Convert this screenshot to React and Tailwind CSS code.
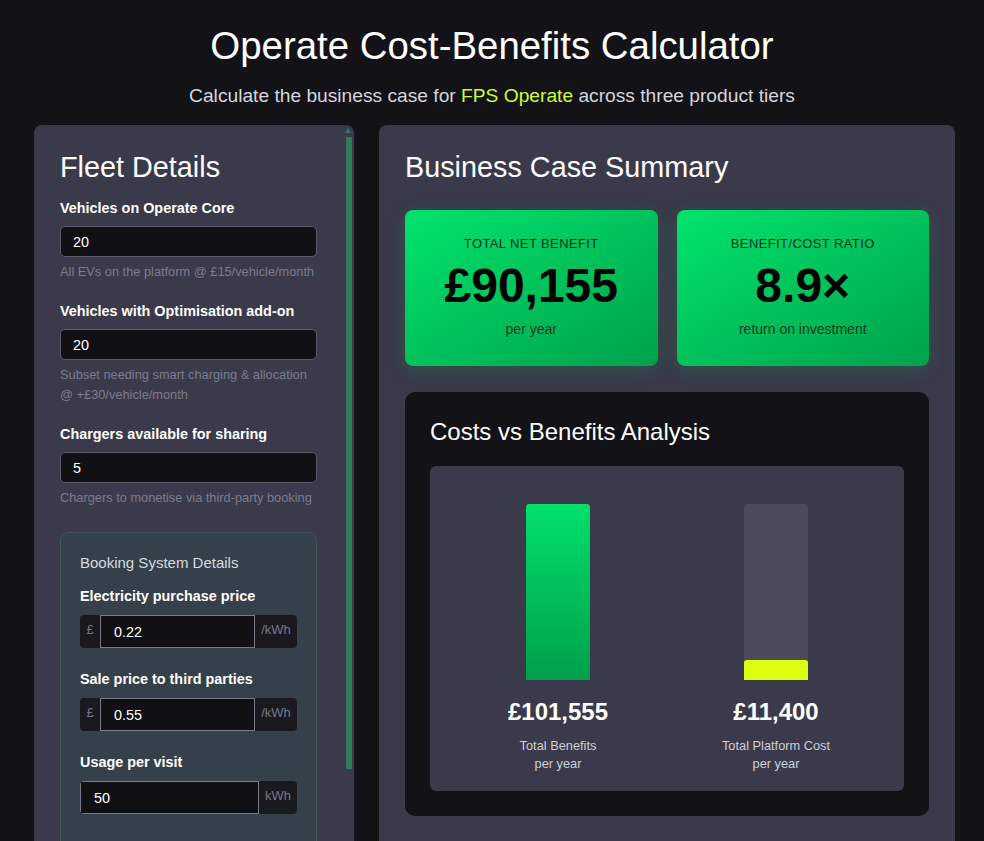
import { useState } from 'react';

const FONT = { fontFamily: '"Liberation Sans", Arial, sans-serif' };

function NumberField({ label, value, help }) {
  return (
    <div className="mb-[20px]">
      <label className="block text-[14.4px] font-bold text-white mb-[9px] leading-[18px]">{label}</label>
      <input
        type="text"
        defaultValue={value}
        className="w-full h-[31px] rounded-[5px] border border-[#5b5b6b] bg-[#111015] px-[12px] text-[14.4px] text-white outline-none"
      />
      <p className="mt-[5px] text-[12.8px] leading-[20px] text-[#7c7c8c]">{help}</p>
    </div>
  );
}

function UnitField({ label, value, prefix, suffix, last }) {
  return (
    <div className={last ? '' : 'mb-[22px]'}>
      <label className="block text-[14.4px] font-bold text-white mb-[10px] leading-[18px]">{label}</label>
      <div className="flex h-[33px] rounded-[4px] bg-[#1a1920] overflow-hidden">
        {prefix && (
          <span className="w-[20px] flex items-center justify-center text-[13px] text-[#77778a] pb-[3px]">
            {prefix}
          </span>
        )}
        <input
          type="text"
          defaultValue={value}
          className="flex-1 min-w-0 h-full border border-[#7a7a88] bg-[#111015] px-[13px] text-[14.4px] text-white outline-none"
        />
        <span
          className={
            suffix === 'kWh'
              ? 'w-[38px] flex items-center justify-center text-[13px] text-[#77778a] pb-[3px]'
              : 'w-[42px] flex items-center justify-center text-[13px] text-[#77778a] pb-[3px]'
          }
        >
          {suffix}
        </span>
      </div>
    </div>
  );
}

function SummaryCard({ title, value, sub }) {
  return (
    <div className="flex-1 h-[156px] rounded-[8px] bg-gradient-to-br from-[#00e46c] to-[#00a24c] shadow-[0_4px_18px_rgba(0,200,90,0.18)] flex flex-col items-center pt-[26px]">
      <p className="text-[13px] tracking-[0.4px] uppercase text-[#06301a] leading-[16px]">{title}</p>
      <p className="mt-[7px] text-[48px] font-bold text-black leading-[54px]">{value}</p>
      <p className="mt-[7px] text-[14px] text-[#0b3a20] leading-[18px]">{sub}</p>
    </div>
  );
}

function Bar({ fillPct, fillClass, value, label }) {
  return (
    <div className="w-[180px] flex flex-col items-center">
      <div className="w-[64px] h-[176px] rounded-t-[3px] bg-[#4a4a5a] flex flex-col justify-end overflow-hidden">
        <div className={fillClass} style={{ height: `${fillPct}%` }} />
      </div>
      <p className="mt-[18px] text-[24px] font-bold text-white leading-[28px]">{value}</p>
      <p className="mt-[11px] text-[12.8px] text-[#cfcfd8] leading-[18px] text-center">
        {label}
        <br />
        per year
      </p>
    </div>
  );
}

export default function App() {
  const [benefits] = useState(101555);
  const [cost] = useState(11400);
  const costPct = (cost / benefits) * 100;

  return (
    <div className="min-h-screen bg-[#131217] text-white overflow-hidden" style={FONT}>
      <header className="pt-[24px] text-center">
        <h1 className="text-[38.4px] leading-[44px] text-white">Operate Cost-Benefits Calculator</h1>
        <p className="mt-[16px] text-[19.2px] leading-[24px] text-[#d6d6de]">
          Calculate the business case for <span className="text-[#ccff33]">FPS Operate</span> across three product
          tiers
        </p>
      </header>

      <main className="mt-[17px] pl-[34px] pr-[29px] flex gap-[25px] items-start">
        {/* Inputs */}
        <section className="relative w-[320px] h-[760px] rounded-[8px] bg-[#3a3a4a] overflow-hidden shrink-0">
          <div className="pl-[26px] pr-[37px] pt-[26px]">
            <h2 className="text-[28.8px] leading-[32px] text-white mb-[16px]">Fleet Details</h2>
            <NumberField label="Vehicles on Operate Core" value="20" help="All EVs on the platform @ £15/vehicle/month" />
            <NumberField
              label="Vehicles with Optimisation add-on"
              value="20"
              help="Subset needing smart charging & allocation @ +£30/vehicle/month"
            />
            <NumberField
              label="Chargers available for sharing"
              value="5"
              help="Chargers to monetise via third-party booking"
            />

            <div className="mt-[24px] rounded-[8px] border border-[#3f5655] bg-[#36404a] px-[19px] pt-[21px] pb-[40px]">
              <h3 className="text-[15px] leading-[18px] text-[#d4dae0] mb-[15px]">Booking System Details</h3>
              <UnitField label="Electricity purchase price" value="0.22" prefix="£" suffix="/kWh" />
              <UnitField label="Sale price to third parties" value="0.55" prefix="£" suffix="/kWh" />
              <UnitField label="Usage per visit" value="50" suffix="kWh" last />
            </div>
          </div>

          {/* scrollbar */}
          <div className="absolute right-[3px] top-[3px] w-0 h-0 border-l-[3px] border-r-[3px] border-b-[5px] border-l-transparent border-r-transparent border-b-[#2e7a5c]" />
          <div className="absolute right-[2px] top-[12px] w-[6px] h-[632px] bg-[#2e7a5c]" />
        </section>

        {/* Summary */}
        <section className="flex-1 h-[760px] rounded-[8px] bg-[#3a3a4a] px-[26px] pt-[26px]">
          <h2 className="text-[28.8px] leading-[32px] text-white">Business Case Summary</h2>

          <div className="mt-[27px] flex gap-[19px]">
            <SummaryCard title="Total Net Benefit" value="£90,155" sub="per year" />
            <SummaryCard title="Benefit/Cost Ratio" value="8.9×" sub="return on investment" />
          </div>

          <div className="mt-[26px] rounded-[10px] bg-[#131217] px-[25px] pt-[26px] pb-[25px]">
            <h3 className="text-[24px] leading-[28px] text-white">Costs vs Benefits Analysis</h3>
            <div className="mt-[20px] rounded-[6px] bg-[#3a3a4a] pt-[38px] pb-[18px] flex justify-center gap-[38px]">
              <Bar
                fillPct={100}
                fillClass="w-full rounded-t-[3px] bg-gradient-to-b from-[#00e06b] to-[#00a04c]"
                value="£101,555"
                label="Total Benefits"
              />
              <Bar
                fillPct={costPct}
                fillClass="w-full rounded-t-[3px] bg-[#dcff14]"
                value="£11,400"
                label="Total Platform Cost"
              />
            </div>
          </div>
        </section>
      </main>
    </div>
  );
}
